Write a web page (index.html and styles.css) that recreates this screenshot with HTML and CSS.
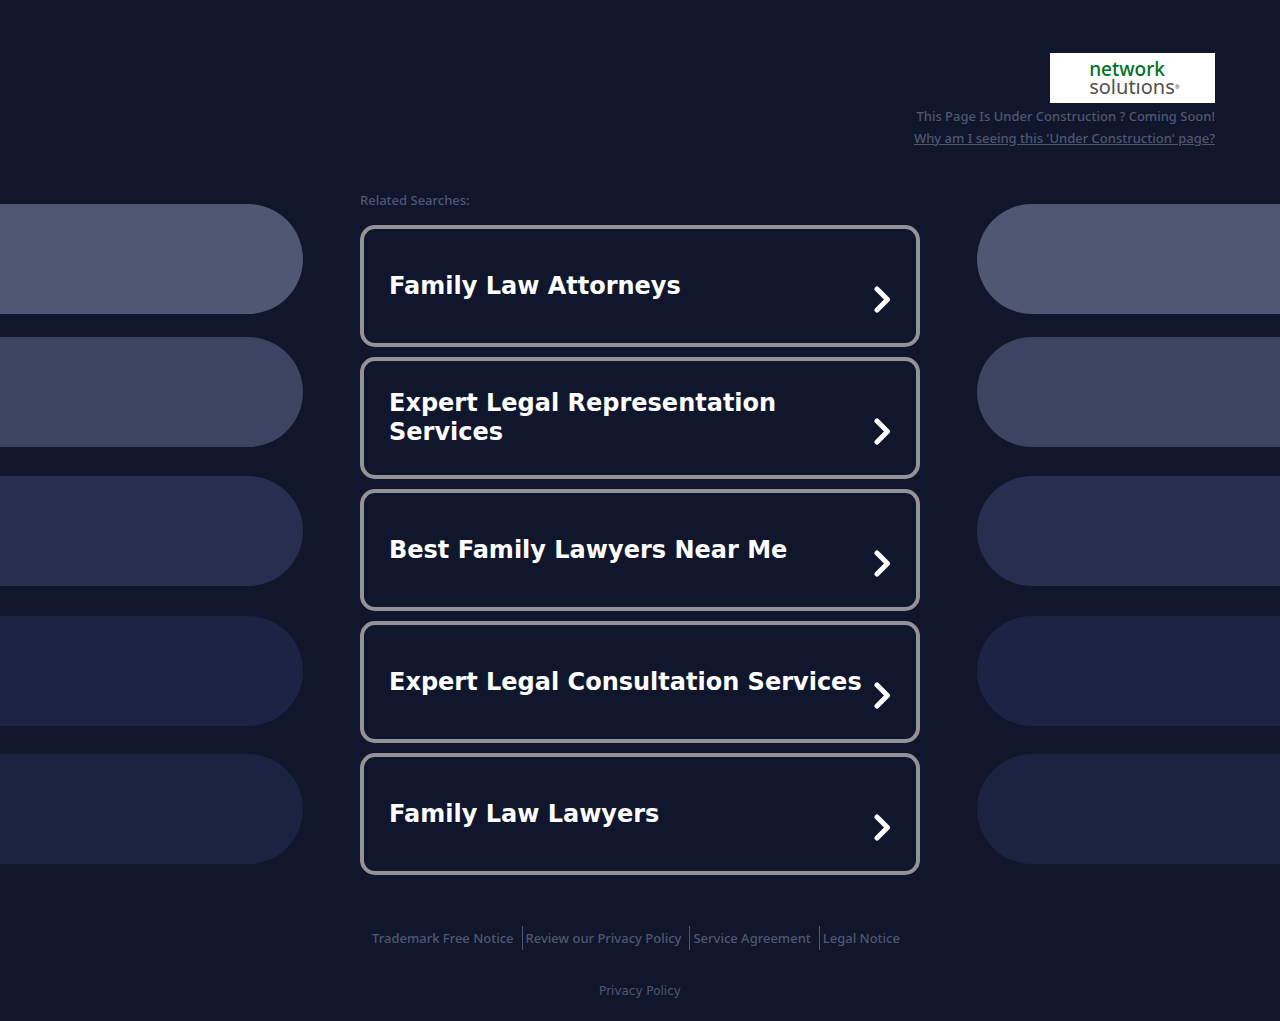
FILE: index.html
```html
<!DOCTYPE html>
<html lang="en">
<head>
<meta charset="utf-8">
<meta name="viewport" content="width=device-width, initial-scale=1">
<title>Under Construction</title>
<link rel="stylesheet" href="styles.css">
</head>
<body>
<header class="header">
  <div class="logo"><span class="logo-text"><span class="logo-top">network</span><br>solutıons<span class="logo-mark">®</span></span></div>
  <p class="notice">This Page Is Under Construction ? Coming Soon!</p>
  <a class="notice why" href="#">Why am I seeing this 'Under Construction' page?</a>
</header>
<div class="content">
  <svg class="bars" viewBox="0 0 1000 660" preserveAspectRatio="xMaxYMin slice" aria-hidden="true">
    <rect x="-200" y="0" width="1200" height="110" rx="55" fill="#4f5873"/>
    <rect x="-200" y="133" width="1200" height="110" rx="55" fill="#3c4462"/>
    <rect x="-200" y="272" width="1200" height="110" rx="55" fill="#262f4f"/>
    <rect x="-200" y="412" width="1200" height="110" rx="55" fill="#1b2444"/>
    <rect x="-200" y="550" width="1200" height="110" rx="55" fill="#1a2341"/>
  </svg>
  <main class="searches">
    <h1 class="label">Related Searches:</h1>
    <a class="card" href="#"><span class="card-title">Family Law Attorneys</span><svg class="arrow" viewBox="0 0 17 27"><path d="M3 3 13.500 13.500 3 24"/></svg></a>
    <a class="card" href="#"><span class="card-title">Expert Legal Representation Services</span><svg class="arrow" viewBox="0 0 17 27"><path d="M3 3 13.500 13.500 3 24"/></svg></a>
    <a class="card" href="#"><span class="card-title">Best Family Lawyers Near Me</span><svg class="arrow" viewBox="0 0 17 27"><path d="M3 3 13.500 13.500 3 24"/></svg></a>
    <a class="card" href="#"><span class="card-title">Expert Legal Consultation Services</span><svg class="arrow" viewBox="0 0 17 27"><path d="M3 3 13.500 13.500 3 24"/></svg></a>
    <a class="card" href="#"><span class="card-title">Family Law Lawyers</span><svg class="arrow" viewBox="0 0 17 27"><path d="M3 3 13.500 13.500 3 24"/></svg></a>
  </main>
  <svg class="bars" viewBox="0 0 1000 660" preserveAspectRatio="xMinYMin slice" aria-hidden="true">
    <rect x="0" y="0" width="1200" height="110" rx="55" fill="#4f5873"/>
    <rect x="0" y="133" width="1200" height="110" rx="55" fill="#3c4462"/>
    <rect x="0" y="272" width="1200" height="110" rx="55" fill="#262f4f"/>
    <rect x="0" y="412" width="1200" height="110" rx="55" fill="#1b2444"/>
    <rect x="0" y="550" width="1200" height="110" rx="55" fill="#1a2341"/>
  </svg>
</div>
<footer class="footer">
  <nav class="links">
    <a href="#">Trademark Free Notice</a>
    <a href="#">Review our Privacy Policy</a>
    <a href="#">Service Agreement</a>
    <a href="#">Legal Notice</a>
  </nav>
  <a class="privacy" href="#">Privacy Policy</a>
</footer>
</body>
</html>
```
FILE: styles.css
```css
* { box-sizing: border-box; }
body {
  margin: 0;
  background: #10162b;
  color: #4f5873;
  font: 500 13px/22px "Noto Sans", sans-serif;
  overflow-x: hidden;
}
a { color: inherit; text-decoration: none; }

.header {
  display: flex;
  flex-direction: column;
  align-items: flex-end;
  padding: 53px 65px 0;
}
.logo {
  display: flex;
  justify-content: center;
  width: 165px;
  height: 50px;
  margin-bottom: 2px;
  padding: 7px 0 0 4px;
  background: #fff;
}
.logo-text {
  color: #505050;
  font: 400 20px/17px "Noto Sans", sans-serif;
}
.logo-top { color: #00701f; font-size: 19px; font-weight: 500; }
.logo-mark { font-size: 6px; vertical-align: 5px; line-height: 1px; }
.notice { margin: 0; }
.why { text-decoration: underline; }

.content {
  display: grid;
  grid-template-columns: minmax(0, 1fr) minmax(0, 560px) minmax(0, 1fr);
  column-gap: 57px;
  margin-top: 40px;
}
.bars {
  width: 100%;
  height: 660px;
  margin-top: 15px;
}
.searches {
  display: flex;
  flex-direction: column;
  gap: 10px;
}
.label {
  margin: 0 0 4px;
  font: inherit;
}
.card {
  display: flex;
  align-items: center;
  justify-content: space-between;
  min-height: 122px;
  padding: 0 25px;
  border: 4px solid #949498;
  border-radius: 15px;
  color: #fff;
}
.card-title { font: 700 24px/29px "DejaVu Sans", sans-serif; }
.arrow {
  flex: none;
  align-self: flex-end;
  width: 17px;
  height: 27px;
  margin-bottom: 30px;
  fill: none;
  stroke: #fff;
  stroke-width: 5px;
  stroke-linecap: round;
  stroke-linejoin: round;
}

.footer {
  display: flex;
  flex-direction: column;
  align-items: center;
  gap: 30px;
  padding: 51px 0 19px;
}
.links { display: flex; line-height: 24px; margin-right: 8px; }
.links a + a {
  margin-left: 8px;
  padding-left: 3px;
  border-left: 1px solid #4f5873;
}
.privacy { font: 400 12px/22px "DejaVu Sans", sans-serif; }
```
